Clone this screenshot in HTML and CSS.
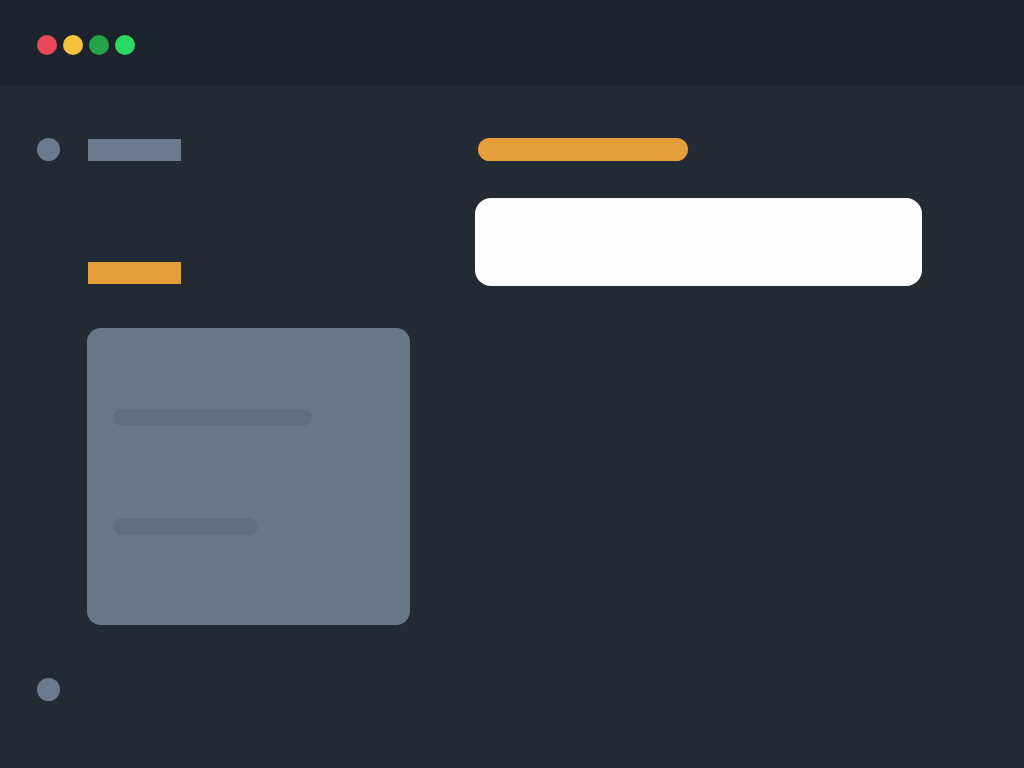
FILE: index.html
```html
<!DOCTYPE html>
<html lang="en">
<head>
<meta charset="utf-8">
<title>Window</title>
<link rel="stylesheet" href="styles.css">
</head>
<body>
<div class="window">
  <header class="titlebar">
    <span class="dot dot-red"></span>
    <span class="dot dot-yellow"></span>
    <span class="dot dot-green"></span>
    <span class="dot dot-lime"></span>
  </header>
  <main class="content">
    <section class="left">
      <div class="row-top">
        <span class="avatar"></span>
        <span class="label-gray"></span>
      </div>
      <span class="label-orange"></span>
      <div class="card">
        <span class="line line-long"></span>
        <span class="line line-short"></span>
      </div>
      <span class="avatar avatar-bottom"></span>
    </section>
    <section class="right">
      <span class="pill"></span>
      <div class="input-box"></div>
    </section>
  </main>
</div>
</body>
</html>
```
FILE: styles.css
```css
* { box-sizing: border-box; }
html, body { margin: 0; padding: 0; }
body {
  width: 1024px;
  height: 768px;
  overflow: hidden;
  background: #222a34;
  font-family: "Liberation Sans", Arial, sans-serif;
}
.window {
  width: 1024px;
  height: 768px;
  display: flex;
  flex-direction: column;
}
.titlebar {
  height: 86px;
  flex: none;
  background: #1d232c;
  display: flex;
  align-items: center;
  gap: 6px;
  padding: 4px 0 0 37px;
}
.dot {
  width: 20px;
  height: 20px;
  border-radius: 50%;
  display: block;
}
.dot-red { background: #e9475a; }
.dot-yellow { background: #f5c33b; }
.dot-green { background: #23a446; }
.dot-lime { background: #2bd962; }
.content {
  flex: 1;
  display: grid;
  grid-template-columns: 438px 1fr;
  padding-left: 37px;
}
.left {
  display: flex;
  flex-direction: column;
  align-items: flex-start;
  padding-top: 52px;
}
.row-top {
  display: flex;
  align-items: center;
  gap: 28px;
}
.avatar {
  width: 23px;
  height: 23px;
  border-radius: 50%;
  background: #6b7a8c;
  display: block;
}
.label-gray {
  width: 93px;
  height: 22px;
  background: #6b7a8c;
  display: block;
}
.label-orange {
  margin: 101px 0 0 51px;
  width: 93px;
  height: 22px;
  background: #e49f3a;
  display: block;
}
.card {
  margin: 44px 0 0 50px;
  width: 323px;
  height: 297px;
  border-radius: 14px;
  background: #677788;
  display: flex;
  flex-direction: column;
  align-items: flex-start;
  padding: 81px 0 0 26px;
}
.line {
  height: 17px;
  border-radius: 9px;
  background: #5f6f80;
  display: block;
}
.line-long { width: 199px; }
.line-short { width: 145px; margin-top: 92px; }
.avatar-bottom {
  margin-top: 53px;
}
.right {
  display: flex;
  flex-direction: column;
  align-items: flex-start;
  padding-top: 52px;
}
.pill {
  margin-left: 3px;
  width: 210px;
  height: 23px;
  border-radius: 12px;
  background: #e49f3a;
  display: block;
}
.input-box {
  margin-top: 37px;
  width: 447px;
  height: 88px;
  border-radius: 16px;
  background: #fdfdfe;
}
```
